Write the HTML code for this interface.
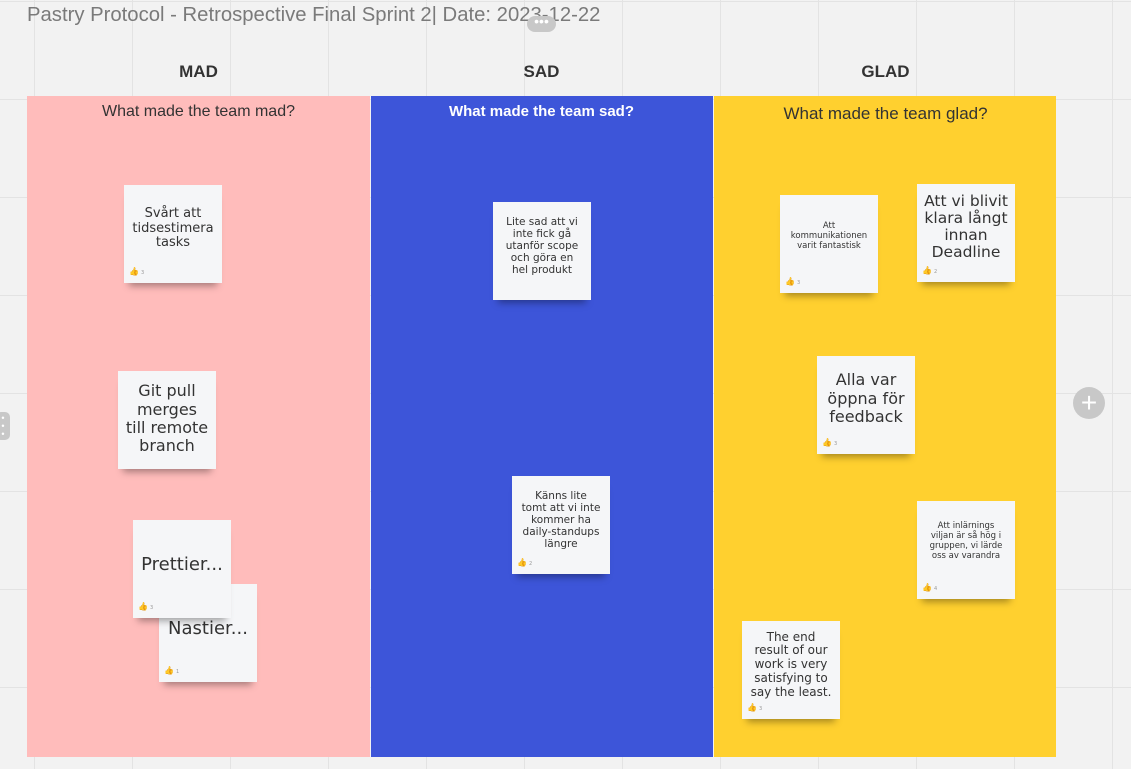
<!DOCTYPE html>
<html><head><meta charset="utf-8"><style>
body{margin:0;width:1131px;height:769px;overflow:hidden;position:relative;font-family:"Liberation Sans",sans-serif;
background-color:#f2f2f2;
background-image:linear-gradient(to right,#e3e3e3 1px,transparent 1px),linear-gradient(to bottom,#e3e3e3 1px,transparent 1px);
background-size:98px 98px;background-position:34px 1px;}
.abs{position:absolute}
.title{left:27px;top:4px;font-size:20.3px;color:#7a7a7a;white-space:nowrap}
.h{top:62px;font-size:17px;font-weight:bold;color:#333;text-align:center;width:343px}
.col{top:96px;height:661px}
.q{top:103px;width:343px;text-align:center;font-size:16px}
.s{position:absolute;width:98px;height:98px;background:#f5f6f8;box-shadow:0 8px 7px -5px rgba(0,0,0,.35);display:flex;align-items:center;justify-content:center;text-align:center;color:#333;font-family:"DejaVu Sans",sans-serif;box-sizing:border-box;padding:4px 2px 14px;line-height:1.15;white-space:nowrap}
.s .t{position:absolute;left:5px;bottom:6px;font-size:8px;color:#e9a000}
.s .t i{font-style:normal;color:#999;font-size:5px;margin-left:2px}
</style></head><body>
<div class="abs title">Pastry Protocol - Retrospective Final Sprint 2| Date: 2023-12-22</div>
<div class="abs" style="left:527px;top:16px;width:29px;height:16px;border-radius:8px;background:#c8c8c8;color:#fff;font-size:14px;line-height:10px;text-align:center">•••</div>
<div class="abs h" style="left:27px">MAD</div>
<div class="abs h" style="left:370px">SAD</div>
<div class="abs h" style="left:714px">GLAD</div>
<div class="abs col" style="left:27px;width:343px;background:#ffbcbb"></div>
<div class="abs col" style="left:371px;width:342px;background:#3d55d9"></div>
<div class="abs col" style="left:714px;width:342px;background:#ffd02f"></div>
<div class="abs q" style="left:27px;color:#333">What made the team mad?</div>
<div class="abs q" style="left:370px;color:#fff;font-weight:bold;font-size:15px">What made the team sad?</div>
<div class="abs q" style="left:714px;top:104px;color:#333;font-size:17px">What made the team glad?</div>

<div class="s" style="left:124px;top:185px;font-size:13px">Svårt att<br>tidsestimera<br>tasks<span class="t">👍<i>3</i></span></div>
<div class="s" style="left:118px;top:371px;font-size:16px;padding-bottom:6px">Git pull<br>merges<br>till remote<br>branch</div>
<div class="s" style="left:159px;top:584px;font-size:18px;padding-bottom:12px">Nastier...<span class="t">👍<i>1</i></span></div>
<div class="s" style="left:133px;top:520px;font-size:18px;padding-bottom:12px">Prettier...<span class="t">👍<i>3</i></span></div>
<div class="s" style="left:493px;top:202px;font-size:10.5px">Lite sad att vi<br>inte fick gå<br>utanför scope<br>och göra en<br>hel produkt</div>
<div class="s" style="left:512px;top:476px;font-size:10.5px">Känns lite<br>tomt att vi inte<br>kommer ha<br>daily-standups<br>längre<span class="t">👍<i>2</i></span></div>
<div class="s" style="left:780px;top:195px;font-size:8.5px;padding-bottom:18px">Att<br>kommunikationen<br>varit fantastisk<span class="t">👍<i>3</i></span></div>
<div class="s" style="left:917px;top:184px;font-size:15.5px;line-height:1.1;padding-bottom:16px">Att vi blivit<br>klara långt<br>innan<br>Deadline<span class="t">👍<i>2</i></span></div>
<div class="s" style="left:817px;top:356px;font-size:16px;padding-bottom:16px">Alla var<br>öppna för<br>feedback<span class="t">👍<i>3</i></span></div>
<div class="s" style="left:917px;top:501px;font-size:8.5px;padding-bottom:20px">Att inlärnings<br>viljan är så hög i<br>gruppen, vi lärde<br>oss av varandra<span class="t">👍<i>4</i></span></div>
<div class="s" style="left:742px;top:621px;font-size:12px;padding-bottom:14px">The end<br>result of our<br>work is very<br>satisfying to<br>say the least.<span class="t">👍<i>3</i></span></div>

<div class="abs" style="left:1073px;top:387px;width:32px;height:32px;border-radius:50%;background:#c8c8c8;color:#fff;font-size:28px;line-height:31px;text-align:center">+</div>
<div class="abs" style="left:-4px;top:412px;width:14px;height:28px;border-radius:5px;background:#c8c8c8;color:#fff;font-size:9px;line-height:8px;text-align:center;padding-top:2px;box-sizing:border-box">•<br>•<br>•</div>
</body></html>
